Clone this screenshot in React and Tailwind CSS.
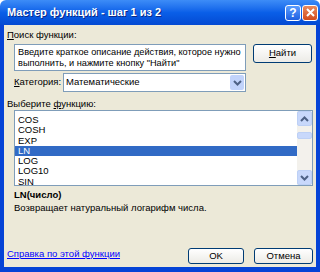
const font = { fontFamily: '"Liberation Sans", Arial, sans-serif' };

const items = ["COS", "COSH", "EXP", "LN", "LOG", "LOG10", "SIN"];

const Arrow = ({ down }) => (
  <svg width="9" height="6" viewBox="0 0 9 6">
    <path
      d={down ? "M1 1 L4.5 4.5 L8 1" : "M1 5 L4.5 1.5 L8 5"}
      fill="none"
      stroke="#4d6185"
      strokeWidth="2"
    />
  </svg>
);

const XpButton = ({ children, className }) => (
  <button
    className={
      "flex items-center justify-center rounded-[3px] border border-[#003c74] bg-gradient-to-b from-white to-[#ecebe6] text-[9.5px] text-black " +
      className
    }
  >
    {children}
  </button>
);

const TitleBar = () => (
  <div className="flex h-[25px] items-center justify-between rounded-t-[6px] bg-gradient-to-b from-[#3d8cf7] via-[#0a5fe8] to-[#0449d2] pl-[7px] pr-[2px]">
    <div className="text-[11px] font-bold text-white [text-shadow:1px_1px_0_#0a2a8a]">
      Мастер функций - шаг 1 из 2
    </div>
    <div className="flex gap-[1px]">
      <div className="flex h-[16px] w-[16px] items-center justify-center rounded-[3px] border border-white bg-gradient-to-b from-[#5b9dff] to-[#1f5fe0] text-[12px] font-bold text-white">
        ?
      </div>
      <div className="flex h-[16px] w-[16px] items-center justify-center rounded-[3px] border border-white bg-gradient-to-b from-[#e98a5c] to-[#d24a1a]">
        <svg width="9" height="9" viewBox="0 0 9 9">
          <path d="M1 1 L8 8 M8 1 L1 8" stroke="white" strokeWidth="2" />
        </svg>
      </div>
    </div>
  </div>
);

export default function App() {
  return (
    <div className="flex h-[272px] w-[320px] flex-col bg-white" style={font}>
      <TitleBar />
      <div className="flex flex-1 flex-col border-x-[4px] border-b-[5px] border-[#0543d6] bg-[#ece9d8] px-[3px] text-[9.5px] text-black">
        <div className="mt-[4px] h-[11px] leading-[11px]">
          <span className="underline">П</span>оиск функции:
        </div>
        <div className="mt-[4px] flex">
          <div className="ml-[7px] h-[27px] w-[232px] whitespace-nowrap border border-[#7f9db9] bg-white px-[3px] pt-[2px] text-[9.2px] leading-[11px]">
            Введите краткое описание действия, которое нужно
            <br />
            выполнить, и нажмите кнопку "Найти"
          </div>
          <XpButton className="ml-[7px] h-[19px] w-[59px]">
            <span className="underline">Н</span>айти
          </XpButton>
        </div>
        <div className="mt-[2px] flex items-center">
          <div className="ml-[7px] w-[49px]">
            <span className="underline">К</span>атегория:
          </div>
          <div className="flex h-[19px] w-[183px] items-center justify-between border border-[#7f9db9] bg-white pl-[2px] pr-[1px]">
            <span>Математические</span>
            <div className="flex h-[15px] w-[14px] items-center justify-center rounded-[2px] bg-[#c1d3fb]">
              <Arrow down />
            </div>
          </div>
        </div>
        <div className="mt-[6px] h-[11px] leading-[11px]">
          Выберите <span className="underline">ф</span>ункцию:
        </div>
        <div className="ml-[7px] mt-[1px] flex h-[76px] w-[299px] border border-[#7f9db9] bg-white">
          <div className="flex flex-1 flex-col pt-[4px]">
            {items.map((it) => (
              <div
                key={it}
                className={
                  "h-[10.3px] pl-[3px] leading-[10.3px] " +
                  (it === "LN" ? "bg-[#316ac5] text-white" : "")
                }
              >
                {it}
              </div>
            ))}
          </div>
          <div className="flex w-[15px] flex-col justify-between bg-[#f3f1ec]">
            <div className="flex h-[15px] items-center justify-center rounded-[2px] border border-[#bdd0f5] bg-[#c8d8fb]">
              <Arrow />
            </div>
            <div className="mb-auto mt-[6px] h-[7px] rounded-[2px] border border-[#bdd0f5] bg-[#c8d8fb]" />
            <div className="flex h-[15px] items-center justify-center rounded-[2px] border border-[#bdd0f5] bg-[#c8d8fb]">
              <Arrow down />
            </div>
          </div>
        </div>
        <div className="ml-[7px] mt-[3px] h-[12px] font-bold leading-[12px]">
          LN(число)
        </div>
        <div className="ml-[7px] mt-[1px] h-[12px] leading-[12px]">
          Возвращает натуральный логарифм числа.
        </div>
        <div className="mt-auto mb-[3px] flex items-end justify-between">
          <div className="mb-[3px] text-[#0000ff] underline">
            Справка по этой функции
          </div>
          <div className="flex gap-[10px]">
            <XpButton className="h-[16px] w-[56px]">OK</XpButton>
            <XpButton className="h-[16px] w-[59px]">Отмена</XpButton>
          </div>
        </div>
      </div>
    </div>
  );
}
